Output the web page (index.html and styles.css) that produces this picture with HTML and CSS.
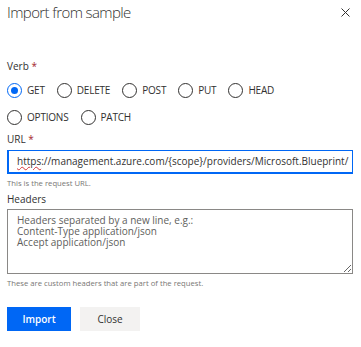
FILE: index.html
```html
<!DOCTYPE html>
<html lang="en">
<head>
  <meta charset="UTF-8">
  <meta name="viewport" content="width=device-width, initial-scale=1.0">
  <title>Import from sample</title>
  <link rel="stylesheet" href="styles.css">
</head>
<body>
  <div class="dialog">
    <div class="dialog-header">
      <h1 class="dialog-title">Import from sample</h1>
      <button class="close-btn" aria-label="Close">
        <svg width="9" height="9" viewBox="0 0 9 9">
          <path d="M0.5 0.5 L8.5 8.5 M8.5 0.5 L0.5 8.5" stroke="#323130" stroke-width="1" fill="none"/>
        </svg>
      </button>
    </div>

    <div class="field-label verb-label">Verb <span class="req">*</span></div>
    <div class="radio-group">
      <div class="radio-row">
        <label class="radio checked"><span class="dot"></span>GET</label>
        <label class="radio"><span class="dot"></span>DELETE</label>
        <label class="radio"><span class="dot"></span>POST</label>
        <label class="radio"><span class="dot"></span>PUT</label>
        <label class="radio"><span class="dot"></span>HEAD</label>
      </div>
      <div class="radio-row">
        <label class="radio"><span class="dot"></span>OPTIONS</label>
        <label class="radio"><span class="dot"></span>PATCH</label>
      </div>
    </div>

    <div class="field-label url-label">URL <span class="req">*</span></div>
    <div class="url-field"><span class="misspelled">https</span>://management.azure.com/{scope}/providers/Microsoft.Blueprint/</div>
    <div class="help">This is the request URL.</div>

    <div class="field-label headers-label">Headers</div>
    <textarea class="headers-box" placeholder="Headers separated by a new line, e.g.:&#10;Content-Type application/json&#10;Accept application/json"></textarea>
    <div class="help">These are custom headers that are part of the request.</div>

    <div class="actions">
      <button class="btn primary">Import</button>
      <button class="btn secondary">Close</button>
    </div>
  </div>
</body>
</html>
```

FILE: styles.css
```css
body {
  margin: 0;
  background: #fff;
  font-family: "Open Sans", "Noto Sans", sans-serif;
  color: #323130;
}

.dialog {
  width: 361px;
  box-sizing: border-box;
  padding: 0 8px 0 7px;
}

.dialog-header {
  display: flex;
  justify-content: space-between;
  align-items: center;
  height: 24px;
}

.dialog-title {
  margin: 0;
  font-size: 15px;
  font-weight: 300;
  letter-spacing: -0.6px;
  line-height: 24px;
  color: #323130;
}

.close-btn {
  border: none;
  background: none;
  padding: 0;
  margin-right: 3px;
  width: 9px;
  height: 9px;
  display: flex;
}

.field-label {
  font-size: 10px;
  line-height: 14px;
}

.req {
  color: #a4262c;
}

.verb-label {
  margin-top: 35px;
}

.radio-group {
  display: flex;
  flex-direction: column;
  gap: 7px;
  margin-top: 7px;
}

.radio-row {
  display: flex;
  gap: 12px;
  height: 20px;
  align-items: center;
}

.radio {
  display: flex;
  align-items: center;
  gap: 5px;
  font-size: 10px;
  letter-spacing: -0.2px;
  line-height: 14px;
}

.dot {
  width: 15px;
  height: 15px;
  box-sizing: border-box;
  border: 1px solid #323130;
  border-radius: 50%;
  position: relative;
}

.radio.checked .dot {
  border-color: #0067f5;
}

.radio.checked .dot::after {
  content: "";
  position: absolute;
  left: 3px;
  top: 3px;
  width: 7px;
  height: 7px;
  border-radius: 50%;
  background: #0067f5;
}

.url-label {
  margin-top: 5px;
}

.url-field {
  margin-top: 4px;
  height: 24px;
  box-sizing: border-box;
  border: 1px solid #0067f5;
  border-bottom-width: 2px;
  border-left-width: 2px;
  padding: 0 8px;
  font-size: 10px;
  line-height: 21px;
  white-space: nowrap;
  overflow: hidden;
  width: 346px;
}

.misspelled {
  text-decoration: underline wavy #d13438;
  text-decoration-thickness: 1px;
}

.help {
  font-size: 7.7px;
  line-height: 12px;
  color: #797775;
  margin-top: 3px;
}

.headers-label {
  margin-top: 3px;
}

.headers-box {
  display: block;
  margin-top: 3px;
  width: 346px;
  height: 65px;
  box-sizing: border-box;
  border: 1px solid #8a8886;
  padding: 5px 9px;
  font-family: "Open Sans", "Noto Sans", sans-serif;
  font-size: 10px;
  line-height: 11px;
  color: #323130;
  resize: vertical;
}

.headers-box::placeholder {
  color: #605e5c;
}

.actions {
  display: flex;
  gap: 9px;
  margin-top: 18px;
}

.btn {
  height: 24px;
  border: none;
  font-family: "Open Sans", "Noto Sans", sans-serif;
  font-size: 10px;
  padding: 0;
}

.primary {
  width: 64px;
  background: #0067f5;
  color: #fff;
  font-weight: 600;
}

.secondary {
  width: 60px;
  background: #f3f2f1;
  color: #323130;
}
```
